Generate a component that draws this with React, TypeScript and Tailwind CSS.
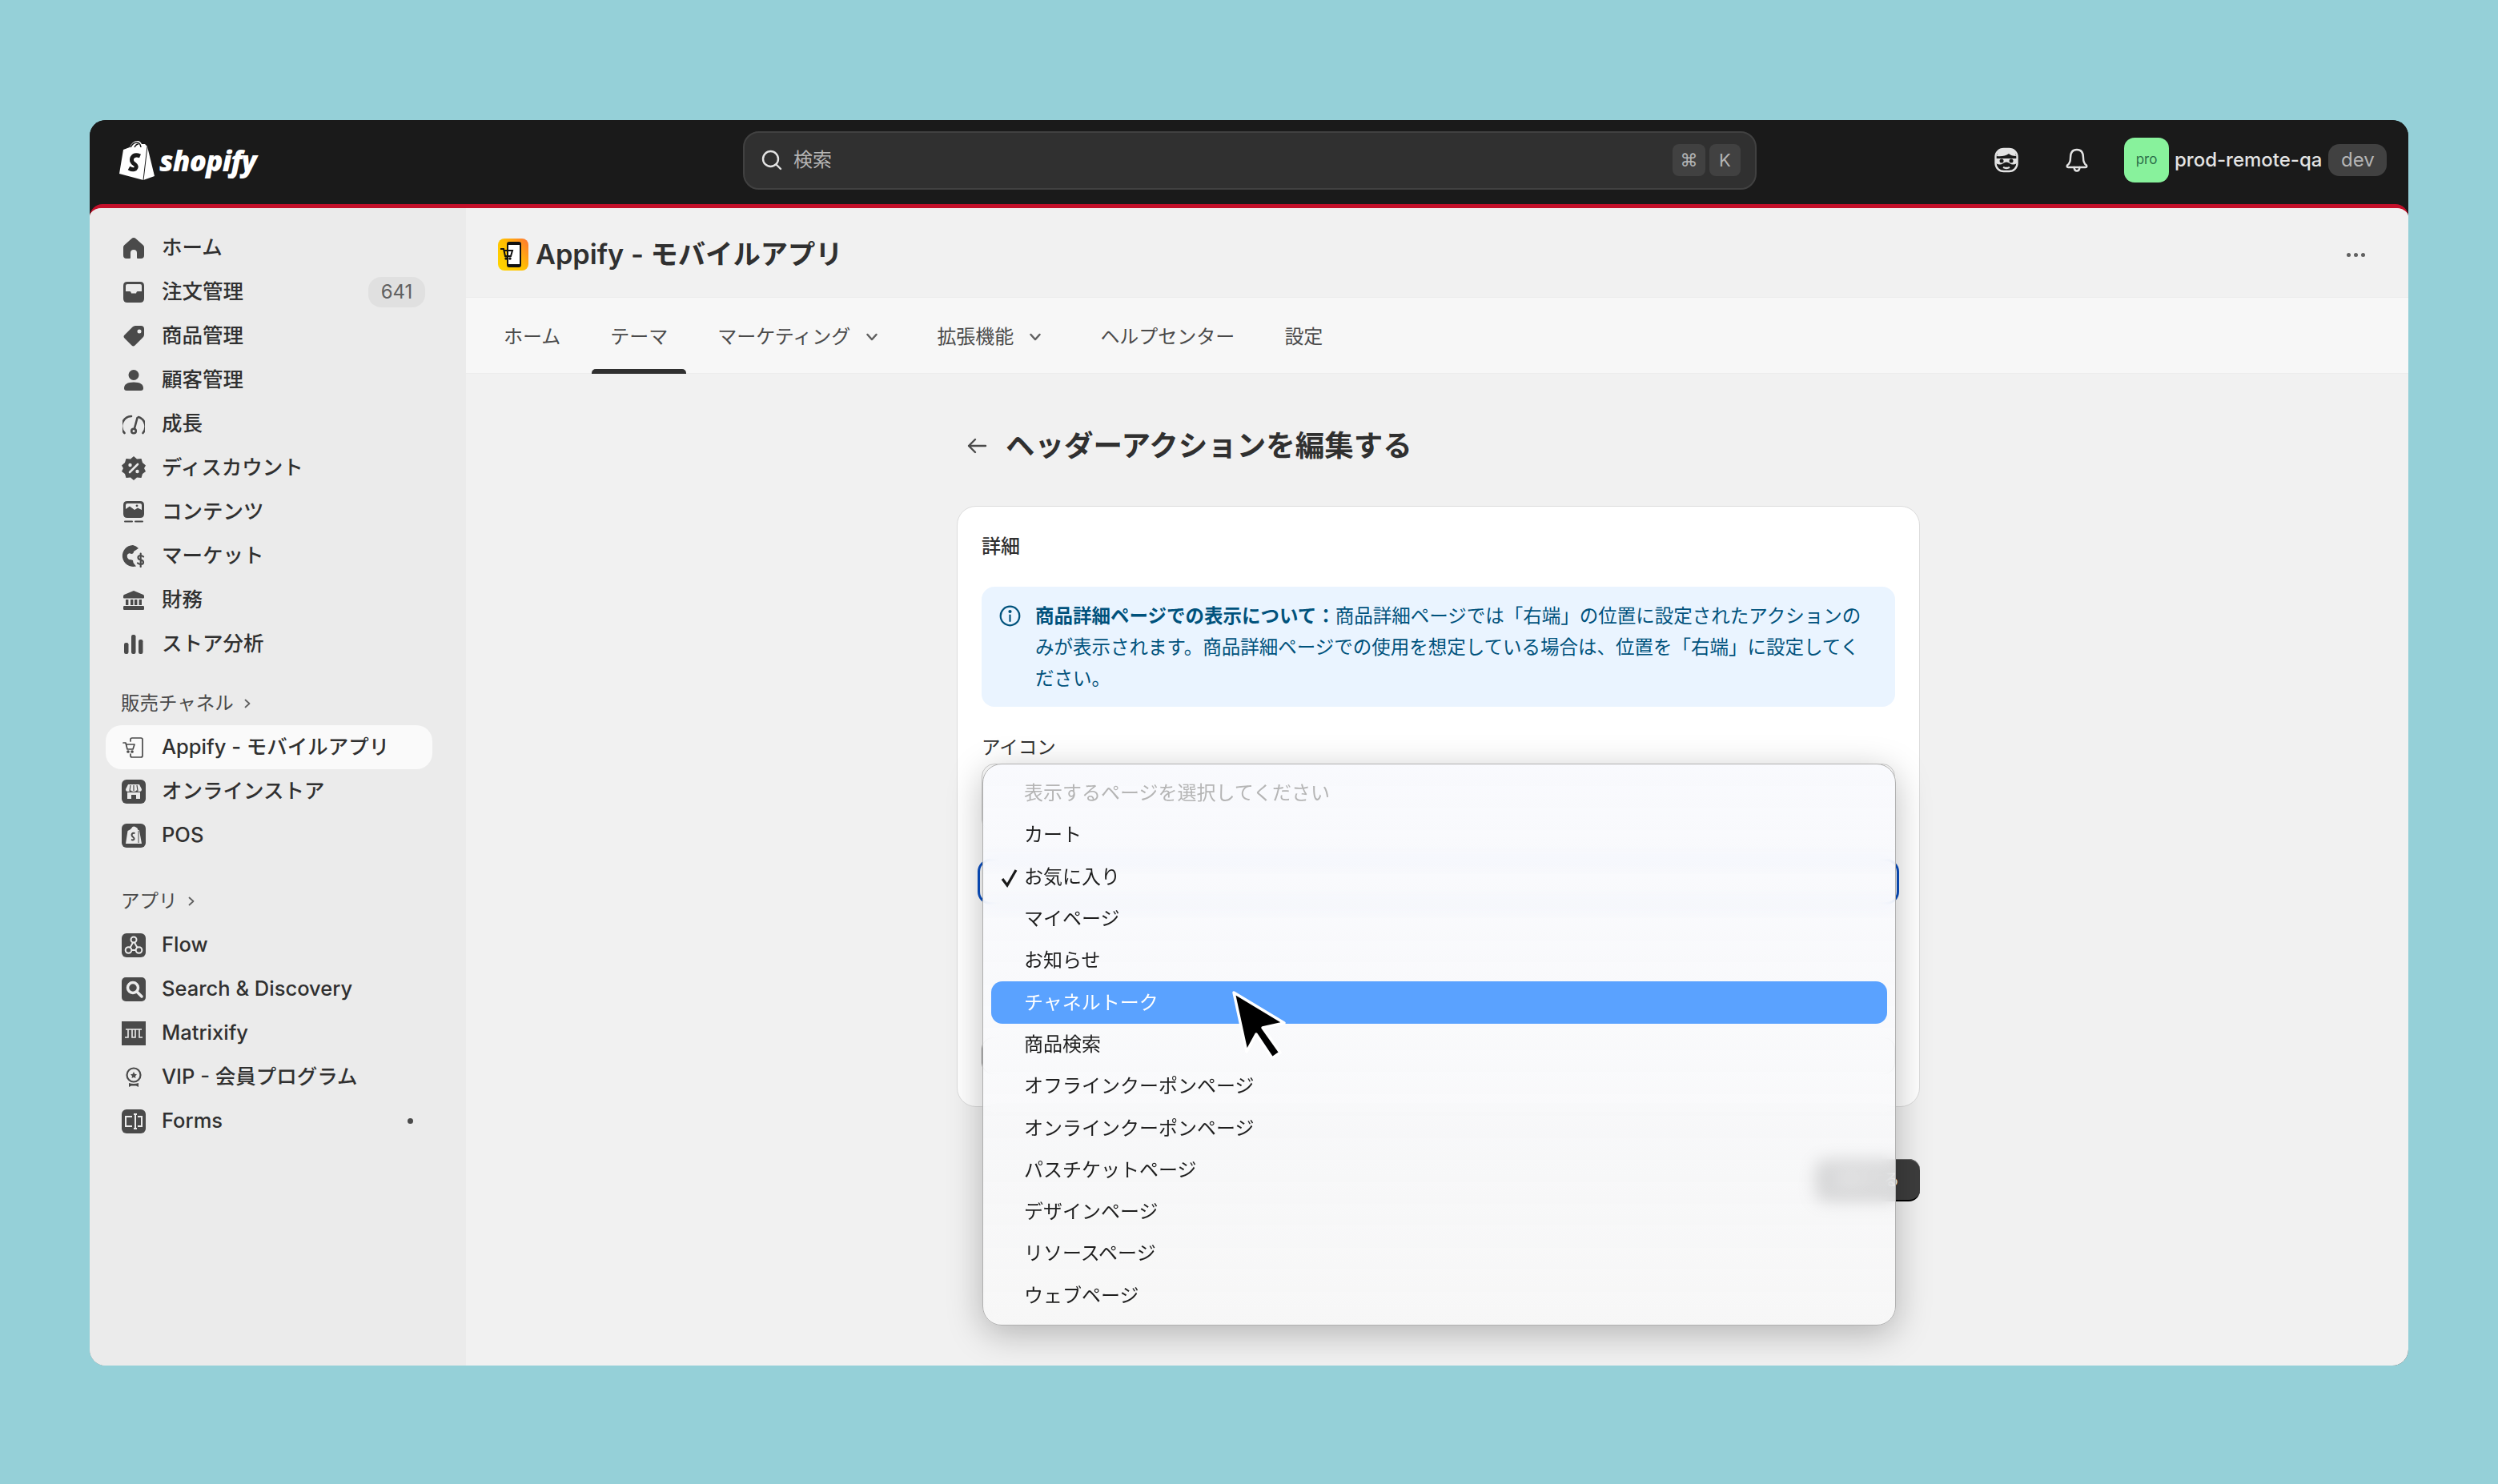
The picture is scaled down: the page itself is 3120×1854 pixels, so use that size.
const stack = "font-['Inter','Noto_Sans_CJK_JP',sans-serif]";

const ICON = "#4a4a4a";

// sidebar icons, drawn on a 26 box
const HomeIcon = () => (
  <svg width="26" height="26" viewBox="0 0 26 26" fill={ICON}>
    <path d="M13 0Q11.5 0 10.5 1L1.5 9Q0 10.2 0 12V22Q0 26 4 26H8Q9 26 9 25V19Q9 15 13 15Q17 15 17 19V25Q17 26 18 26H22Q26 26 26 22V12Q26 10.2 24.5 9L15.5 1Q14.5 0 13 0Z" />
  </svg>
);
const OrdersIcon = () => (
  <svg width="26" height="26" viewBox="0 0 26 26" fill={ICON}>
    <path fillRule="evenodd" d="M5 0H21Q26 0 26 5V21Q26 26 21 26H5Q0 26 0 21V5Q0 0 5 0ZM5 3Q3 3 3 5V12H8Q9 12 9.5 13L10 14.5H16L16.5 13Q17 12 18 12H23V5Q23 3 21 3Z" />
  </svg>
);
const TagIcon = () => (
  <svg width="26" height="26" viewBox="0 0 26 26" fill={ICON}>
    <path fillRule="evenodd" d="M15 0H22Q26 0 26 4V11Q26 13 24.5 14.5L14.5 24.5Q12.5 26.5 10.5 24.5L1.5 15.5Q-.5 13.5 1.5 11.5L11.5 1.5Q13 0 15 0ZM20 4.5A2.5 2.5 0 1 0 20 9.5A2.5 2.5 0 1 0 20 4.5Z" />
  </svg>
);
const PersonIcon = () => (
  <svg width="26" height="26" viewBox="0 0 26 26" fill={ICON}>
    <circle cx="13" cy="6.5" r="6.5" />
    <path d="M1 23Q1 15.5 13 15.5Q25 15.5 25 23Q25 26 22 26H4Q1 26 1 23Z" />
  </svg>
);
const GaugeIcon = () => (
  <svg width="28" height="26" viewBox="0 0 28 26" fill="none" stroke={ICON} strokeWidth="2.6" strokeLinecap="round">
    <path d="M2.500 24A12.500 12.500 0 0 1 11 3" />
    <path d="M20 4A12.500 12.500 0 0 1 25.500 24" />
    <path d="M18.500 5L15 18" />
    <circle cx="14" cy="21.500" r="2.800" />
  </svg>
);
const DiscountIcon = () => (
  <svg width="30" height="30" viewBox="0 0 30 30" fill={ICON}>
    <path d="M15 0L19 3.5L24.5 3L26 8L30 11.5L28 15L30 19L26 22L24.5 27L19 26.5L15 30L11 26.5L5.5 27L4 22L0 19L2 15L0 11.5L4 8L5.5 3L11 3.5Z" />
    <path d="M10 20L20 10" stroke="#ebebeb" strokeWidth="2.6" strokeLinecap="round" />
    <circle cx="10.5" cy="11" r="2.2" fill="#ebebeb" />
    <circle cx="19.5" cy="19" r="2.2" fill="#ebebeb" />
  </svg>
);
const ContentIcon = () => (
  <svg width="26" height="28" viewBox="0 0 26 28" fill={ICON}>
    <path fillRule="evenodd" d="M5 0H21Q26 0 26 5V16Q26 21 21 21H5Q0 21 0 16V5Q0 0 5 0ZM5 3Q3 3 3 5V10L8 6.5L14 11L18 8.5L23 11V5Q23 3 21 3Z" />
    <circle cx="17" cy="5.8" r="1.4" />
    <rect x="1" y="24.5" width="11" height="2" rx="1" />
    <rect x="14" y="24.5" width="11" height="2" rx="1" />
  </svg>
);
const MarketIcon = () => (
  <svg width="30" height="28" viewBox="0 0 30 28" fill={ICON}>
    <path d="M14 0A13.5 13.5 0 1 0 18 26.5L16 24Q14 22 14 19Q12 18 9 18Q6 16 7 12Q9 9 12 11Q15 11 15 8Q18 6 21 4A13.5 13.5 0 0 0 14 0Z" />
    <path d="M27 14.5Q25.5 13 23.5 13Q20.5 13 20.5 15.5Q20.5 18 23.7 18.5Q27 19 27 21.5Q27 24 24 24Q21.5 24 20 22.5M23.7 10.5V27" fill="none" stroke={ICON} strokeWidth="2.2" strokeLinecap="round" />
  </svg>
);
const BankIcon = () => (
  <svg width="26" height="24" viewBox="0 0 26 24" fill={ICON}>
    <path d="M13 0L25 5Q26 5.5 26 7V8.5Q26 9.5 25 9.5H1Q0 9.5 0 8.5V7Q0 5.5 1 5Z" />
    <rect x="3" y="11" width="3.4" height="7" />
    <rect x="9" y="11" width="3.4" height="7" />
    <rect x="14" y="11" width="3.4" height="7" />
    <rect x="19.6" y="11" width="3.4" height="7" />
    <rect y="19" width="26" height="5" rx="1.2" />
  </svg>
);
const ChartIcon = () => (
  <svg width="24" height="24" viewBox="0 0 24 24" fill={ICON}>
    <rect x="0" y="10" width="5.5" height="14" rx="2.2" />
    <rect x="9" y="0" width="5.5" height="24" rx="2.2" />
    <rect x="18" y="6" width="5.5" height="18" rx="2.2" />
  </svg>
);
const PhoneCartIcon = () => (
  <svg width="30" height="26" viewBox="0 0 30 26" fill="none" stroke={ICON} strokeWidth="1.7" strokeLinejoin="round" strokeLinecap="round">
    <path d="M11 5V3Q11 1 13 1H24Q26 1 26 3V23Q26 25 24 25H13Q11 25 11 23V21" />
    <path d="M2 7H5L7 15H14L16 9H6" />
    <circle cx="8" cy="18" r="1" />
    <circle cx="13" cy="18" r="1" />
  </svg>
);
const StoreIcon = () => (
  <svg width="30" height="30" viewBox="0 0 30 30">
    <rect width="30" height="30" rx="6" fill={ICON} />
    <path d="M8 6H22L25 12Q25 15 22 15Q19.5 15 19 13Q18 15 15 15Q12 15 11 13Q10.500 15 8 15Q5 15 5 12Z" fill="#ebebeb" />
    <path d="M7 16V24H12V19H18V24H23V16Z" fill="#ebebeb" />
    <path d="M11 7L10 14M19 7L20 14M15 7V14" stroke={ICON} strokeWidth="1.2" />
  </svg>
);
const PosIcon = () => (
  <svg width="30" height="30" viewBox="0 0 30 30">
    <rect width="30" height="30" rx="6" fill={ICON} />
    <path d="M5 25L7.500 9Q11 7.500 12 6Q14 2.500 17 4Q20 5 20.500 8L22 8.500L25 25Z" fill="#ebebeb" />
    <path d="M16.500 12Q13 11 12.500 14Q12.500 16 14.500 17Q16 18 15.500 19.500Q14.500 21 12 20" fill="none" stroke={ICON} strokeWidth="2" />
    <path d="M21 9V24" stroke={ICON} strokeWidth="1" />
  </svg>
);
const FlowIcon = () => (
  <svg width="30" height="30" viewBox="0 0 30 30">
    <rect width="30" height="30" rx="6" fill={ICON} />
    <g fill="none" stroke="#ebebeb" strokeWidth="2">
      <circle cx="15" cy="8" r="3.500" />
      <circle cx="8.500" cy="21" r="3.800" />
      <circle cx="21.500" cy="21" r="3.800" />
      <path d="M14 11.500L10.500 18M16 11.500L19.500 18M12.300 21H17.700" />
    </g>
  </svg>
);
const SearchAppIcon = () => (
  <svg width="30" height="30" viewBox="0 0 30 30">
    <rect width="30" height="30" rx="5" fill={ICON} />
    <circle cx="14" cy="13" r="6.500" fill="none" stroke="#ebebeb" strokeWidth="3.500" />
    <path d="M19 18L25 24" stroke="#ebebeb" strokeWidth="3.500" strokeLinecap="round" />
  </svg>
);
const MatrixifyIcon = () => (
  <svg width="30" height="30" viewBox="0 0 30 30">
    <rect width="30" height="30" fill={ICON} />
    <path d="M4 20H8V10H13V20H17V10H22V20H26M5 10H25" fill="none" stroke="#ebebeb" strokeWidth="1.600" />
  </svg>
);
const VipIcon = () => (
  <svg width="24" height="26" viewBox="0 0 24 26">
    <circle cx="12" cy="10" r="8.500" fill="none" stroke={ICON} strokeWidth="2.200" />
    <path d="M12 6L13.300 8.800L16 9.200L14 11.200L14.500 14L12 12.700L9.500 14L10 11.200L8 9.200L10.700 8.800Z" fill={ICON} />
    <path d="M6 20V25L9 23.500H15L18 25V20Q12 22 6 20Z" fill={ICON} />
  </svg>
);
const FormsIcon = () => (
  <svg width="30" height="30" viewBox="0 0 30 30">
    <rect width="30" height="30" rx="6" fill={ICON} />
    <g fill="none" stroke="#ebebeb" strokeWidth="2">
      <path d="M13 9H5V21H13" />
      <path d="M20 9H25V21H20" />
      <path d="M15 6H19M15 24H19M17 6V24" />
    </g>
  </svg>
);

const Chevron = ({ size = 16, color = "#616161" }: { size?: number; color?: string }) => (
  <svg width={size} height={size} viewBox="0 0 16 16" fill="none" stroke={color} strokeWidth="1.800" strokeLinecap="round" strokeLinejoin="round">
    <path d="M3.500 5.500L8 10.500L12.500 5.500" />
  </svg>
);

const mainItems = [
  { label: "ホーム", icon: <HomeIcon /> },
  { label: "注文管理", icon: <OrdersIcon />, badge: "641" },
  { label: "商品管理", icon: <TagIcon /> },
  { label: "顧客管理", icon: <PersonIcon /> },
  { label: "成長", icon: <GaugeIcon /> },
  { label: "ディスカウント", icon: <DiscountIcon /> },
  { label: "コンテンツ", icon: <ContentIcon /> },
  { label: "マーケット", icon: <MarketIcon /> },
  { label: "財務", icon: <BankIcon /> },
  { label: "ストア分析", icon: <ChartIcon /> },
];

const channelItems = [
  { label: "Appify - モバイルアプリ", icon: <PhoneCartIcon />, active: true },
  { label: "オンラインストア", icon: <StoreIcon /> },
  { label: "POS", icon: <PosIcon /> },
];

const appItems = [
  { label: "Flow", icon: <FlowIcon /> },
  { label: "Search & Discovery", icon: <SearchAppIcon /> },
  { label: "Matrixify", icon: <MatrixifyIcon /> },
  { label: "VIP - 会員プログラム", icon: <VipIcon /> },
  { label: "Forms", icon: <FormsIcon />, dot: true },
];

type NavItem = { label: string; icon: React.ReactNode; badge?: string; active?: boolean; dot?: boolean };

function NavRow({ item }: { item: NavItem }) {
  return (
    <div className={`flex h-[55px] items-center rounded-[20px] pl-[20px] pr-[9px] text-[25.500px] font-medium text-[#303030] ${item.active ? "bg-[#fafafa]" : ""}`}>
      <span className="flex w-[30px] shrink-0 items-center justify-center">{item.icon}</span>
      <span className="ml-[20px] flex-1 whitespace-nowrap">{item.label}</span>
      {item.badge && (
        <span className="flex h-[38px] w-[71px] items-center justify-center rounded-[16px] bg-[#e0e0e0] text-[24px] font-normal text-[#616161]">
          {item.badge}
        </span>
      )}
      {item.dot && <span className="mr-[15px] h-[7px] w-[7px] rounded-full bg-[#4a4a4a]" />}
    </div>
  );
}

function SectionHeading({ label, className }: { label: string; className: string }) {
  return (
    <div className={`flex h-[55px] items-center gap-[10px] pl-[19px] text-[23.500px] text-[#4a4a4a] ${className}`}>
      {label}
      <svg width="14" height="14" viewBox="0 0 14 14" fill="none" stroke="#616161" strokeWidth="1.800" strokeLinecap="round" strokeLinejoin="round">
        <path d="M4.500 2.500L9.500 7L4.500 11.500" />
      </svg>
    </div>
  );
}

function Sidebar() {
  return (
    <aside className="w-[470px] shrink-0 bg-[#ebebeb] pl-[20px] pr-[42px] pt-[22px]">
      {mainItems.map((item) => (
        <NavRow key={item.label} item={item} />
      ))}
      <SectionHeading label="販売チャネル" className="mt-[19px]" />
      {channelItems.map((item) => (
        <NavRow key={item.label} item={item} />
      ))}
      <SectionHeading label="アプリ" className="mt-[27px]" />
      {appItems.map((item) => (
        <NavRow key={item.label} item={item} />
      ))}
    </aside>
  );
}

function TopBar() {
  return (
    <header className="relative flex h-[105px] items-center bg-[#1a1a1a] pb-[5px]">
      <div className="ml-[36px] flex w-[780px] items-center gap-[5px]">
        <svg width="46" height="50" viewBox="0 0 46 50">
          <path d="M1 42L6 12L14 9Q17 1 24 1Q27 1 29 5L33 5L36 8L45 45L31 50Z" fill="#fff" />
          <path d="M31 50L36 8" stroke="#1a1a1a" strokeWidth="1" />
          <path d="M15 9Q18 3 23 3Q27 3 28 9M20 9Q22 5 25 5" fill="none" stroke="#1a1a1a" strokeWidth="1.500" />
          <path d="M27 20Q20 17 17 22Q15 27 20 30Q24 33 21 36Q18 38 13 35" fill="none" stroke="#1a1a1a" strokeWidth="5" />
        </svg>
        <span className="font-['Open_Sans',sans-serif] text-[35px] font-extrabold italic leading-none tracking-[-0.8px] text-white">shopify</span>
      </div>
      <div className="flex h-[73px] w-[1266px] items-center rounded-[20px] border-2 border-[#414141] bg-[#303030] pl-[20px] pr-[18px]">
        <svg width="28" height="28" viewBox="0 0 28 28" fill="none" stroke="#e3e3e3" strokeWidth="2.400" strokeLinecap="round">
          <circle cx="12.500" cy="12.500" r="9.500" />
          <path d="M19.500 19.500L25 25" />
        </svg>
        <span className="ml-[13px] flex-1 text-[24px] text-[#b5b5b5]">検索</span>
        <span className="flex h-[40px] w-[41px] items-center justify-center rounded-[8px] bg-[#414141] font-['DejaVu_Sans',sans-serif] text-[22px] text-[#b5b5b5]">⌘</span>
        <span className="ml-[5px] flex h-[40px] w-[39px] items-center justify-center rounded-[8px] bg-[#414141] text-[22px] text-[#b5b5b5]">K</span>
      </div>
      <div className="ml-[296px] flex items-center">
        <svg width="32" height="32" viewBox="0 0 32 32" fill="none" stroke="#e3e3e3" strokeWidth="2.400">
          <rect x="2.500" y="2" width="27" height="28" rx="10" />
          <path d="M4 11Q4 3 12 2.500H20Q28 3 28 11Q22 11 19 8Q13 12 4 11Z" fill="#e3e3e3" stroke="none" />
          <path d="M3 14H29V20Q24 23 20 20Q16 17 12 20Q8 23 3 20Z" fill="#e3e3e3" stroke="none" />
          <circle cx="10" cy="17" r="2.500" fill="#1a1a1a" stroke="none" />
          <circle cx="22" cy="17" r="2.500" fill="#1a1a1a" stroke="none" />
          <path d="M12 25Q16 27 20 25" />
        </svg>
        <svg className="ml-[56px]" width="32" height="32" viewBox="0 0 32 32" fill="none" stroke="#e3e3e3" strokeWidth="2.400" strokeLinecap="round" strokeLinejoin="round">
          <path d="M8 13Q8 3 16 3Q24 3 24 13Q24 20 28 22.500Q29 25 27 25H5Q3 25 4 22.500Q8 20 8 13Z" />
          <path d="M12.500 25Q13 29.500 16 29.500Q19 29.500 19.500 25" />
        </svg>
        <span className="ml-[43px] flex h-[56px] w-[56px] items-center justify-center rounded-[13px] bg-[#88f29c] text-[17px] text-[#2c6e49]">pro</span>
        <span className="ml-[7px] whitespace-nowrap text-[24px] font-medium text-[#e3e3e3]">prod-remote-qa</span>
        <span className="ml-[8px] flex h-[40px] w-[73px] items-center justify-center rounded-[14px] bg-[#414141] text-[24px] text-[#b5b5b5]">dev</span>
      </div>
    </header>
  );
}

function AppHeader() {
  return (
    <div className="flex h-[111px] items-center justify-between bg-[#f1f1f1] pl-[40px] pr-[54px] pt-[5px]">
      <div className="flex items-center gap-[9px]">
        <svg width="38" height="40" viewBox="0 0 38 40">
          <defs>
            <linearGradient id="appify" x1="0" y1="0.900" x2="1" y2="0.100">
              <stop offset="0" stopColor="#ffd400" />
              <stop offset="0.500" stopColor="#ffc000" />
              <stop offset="1" stopColor="#ff7a2f" />
            </linearGradient>
          </defs>
          <rect width="38" height="40" rx="8" fill="url(#appify)" />
          <rect x="11" y="4" width="18" height="32" rx="3" fill="#111" />
          <rect x="13" y="8" width="14" height="24" fill="#fff" />
          <path d="M3 13H7L9 22H16L18 15H8" fill="none" stroke="#111" strokeWidth="2" />
          <circle cx="10" cy="25" r="1.700" fill="#111" />
          <circle cx="15" cy="25" r="1.700" fill="#111" />
        </svg>
        <h1 className="text-[34.300px] font-semibold leading-none text-[#303030]">Appify - モバイルアプリ</h1>
      </div>
      <div className="flex gap-[4px]">
        <span className="h-[5px] w-[5px] rounded-full bg-[#616161]" />
        <span className="h-[5px] w-[5px] rounded-full bg-[#616161]" />
        <span className="h-[5px] w-[5px] rounded-full bg-[#616161]" />
      </div>
    </div>
  );
}

const tabs = [
  { label: "ホーム" },
  { label: "テーマ", active: true },
  { label: "マーケティング", chevron: true },
  { label: "拡張機能", chevron: true },
  { label: "ヘルプセンター" },
  { label: "設定" },
];

function Tabs() {
  return (
    <nav className="flex h-[96px] gap-[16px] border-y border-[#ececec] bg-[#f7f7f7] pl-[24px]">
      {tabs.map((tab) => (
        <div key={tab.label} className="relative flex items-center px-[23px] pt-[3px] text-[24px] text-[#4a4a4a]">
          {tab.label}
          {tab.chevron && (
            <span className="ml-[17px] mr-[9px]">
              <Chevron size={20} />
            </span>
          )}
          {tab.active && <span className="absolute bottom-[-1px] left-0 right-0 h-[6px] rounded-t-[5px] bg-[#303030]" />}
        </div>
      ))}
    </nav>
  );
}

const pageOptions = [
  "カート",
  "お気に入り",
  "マイページ",
  "お知らせ",
  "チャネルトーク",
  "商品検索",
  "オフラインクーポンページ",
  "オンラインクーポンページ",
  "パスチケットページ",
  "デザインページ",
  "リソースページ",
  "ウェブページ",
];

function PageDropdown() {
  return (
    <div className="absolute left-[31px] top-[321px] z-10 h-[702px] w-[1141px] rounded-[24px] border border-[#b0b0b0] bg-gradient-to-b from-[#f8f9fd]/90 to-[#f8f8f8]/80 px-[10px] pb-[12px] pt-[10px] shadow-[0_10px_44px_rgba(0,0,0,0.26)] backdrop-blur-[10px]">
      <div className="flex h-[52.300px] items-center pl-[41px] text-[24px] text-[#b5b5b5]">表示するページを選択してください</div>
      {pageOptions.map((option) => {
        const hovered = option === "チャネルトーク";
        return (
          <div
            key={option}
            className={`relative flex h-[52.300px] items-center rounded-[14px] pl-[41px] text-[24px] ${hovered ? "bg-[#5aa2ff] text-white" : "text-[#1f1f1f]"}`}
          >
            {option === "お気に入り" && (
              <svg className="absolute left-[12px] top-[15px]" width="22" height="24" viewBox="0 0 22 24" fill="none" stroke="#1a1a1a" strokeWidth="3.200">
                <path d="M2 13L8 21L19 2" />
              </svg>
            )}
            {option}
          </div>
        );
      })}
    </div>
  );
}

function Card() {
  return (
    <section className="relative rounded-[24px] border border-[#dcdcdc] bg-white px-[30px] pb-[40px] pt-[30px]">
      <h2 className="text-[24px] font-medium leading-[40px] text-[#303030]">詳細</h2>
      <div className="mt-[30px] flex h-[150px] gap-[18px] rounded-[16px] bg-[#eaf4ff] pl-[22px] pr-[36px] pt-[17px] text-[23.500px] leading-[39px] text-[#00527c]">
        <svg className="mt-[6px] shrink-0" width="27" height="27" viewBox="0 0 27 27" fill="none" stroke="#00527c" strokeWidth="2.200" strokeLinecap="round">
          <circle cx="13.500" cy="13.500" r="11.800" />
          <path d="M13.500 12.500V20" />
          <circle cx="13.500" cy="8" r="1" fill="#00527c" />
        </svg>
        <p>
          <strong className="font-bold">商品詳細ページでの表示について：</strong>
          商品詳細ページでは「右端」の位置に設定されたアクションのみが表示されます。商品詳細ページでの使用を想定している場合は、位置を「右端」に設定してください。
        </p>
      </div>
      <label className="mt-[31px] block text-[23.500px] leading-[40px] text-[#303030]">アイコン</label>
      <div className="h-[86px] rounded-[16px] border border-[#d0d0d0] bg-white" />
      <div className="mt-[33px] -mx-[5px] h-[57px] rounded-[16px] border-[3px] border-[#0a4fc2] bg-white" />
      <div className="mt-[166px] h-[46px] rounded-[14px] border border-[#8a8a8a] bg-white" />
      <PageDropdown />
    </section>
  );
}

export default function App() {
  return (
    <div className={`h-[1854px] w-[3120px] overflow-hidden bg-[#95d0d8] px-[112px] pt-[150px] ${stack}`}>
      <div className="relative flex h-[1556px] w-[2896px] flex-col overflow-hidden rounded-[20px] bg-[#1a1a1a]">
        <TopBar />
        <div className="flex min-h-0 flex-1 flex-col overflow-hidden rounded-t-[16px] border-t-[5px] border-[#c4102a] bg-[#f1f1f1]">
          <div className="flex min-h-0 flex-1">
            <Sidebar />
            <main className="min-w-0 flex-1">
              <AppHeader />
              <Tabs />
              <div className="relative ml-[613px] w-[1203px] pt-[62px]">
                <div className="flex h-[56px] items-center gap-[23px] pl-[12px]">
                  <svg width="26" height="26" viewBox="0 0 26 26" fill="none" stroke="#4a4a4a" strokeWidth="2.400" strokeLinecap="round" strokeLinejoin="round">
                    <path d="M24 13H3M11 5L3 13L11 21" />
                  </svg>
                  <h1 className="text-[36.500px] font-bold leading-none text-[#303030]">ヘッダーアクションを編集する</h1>
                </div>
                <div className="mt-[47px]">
                  <Card />
                </div>
                <div className="mt-[65px] flex justify-end">
                  <button className="flex h-[53px] w-[131px] items-center justify-center rounded-[14px] border-b-2 border-black bg-[#3d3d3d] text-[20px] text-white shadow-[inset_0_1px_0_#6b6b6b]">
                    保存する
                  </button>
                </div>
                {/* cursor sits above the dropdown */}
                <svg className="absolute left-[343px] top-[770px] z-20" width="72" height="90" viewBox="0 0 72 90">
                  <path d="M3 3L66 41L39 47L61 78L51 85L31 55L19 77Z" fill="#000" stroke="#fff" strokeWidth="3.500" strokeLinejoin="round" />
                </svg>
              </div>
            </main>
          </div>
        </div>
      </div>
    </div>
  );
}
